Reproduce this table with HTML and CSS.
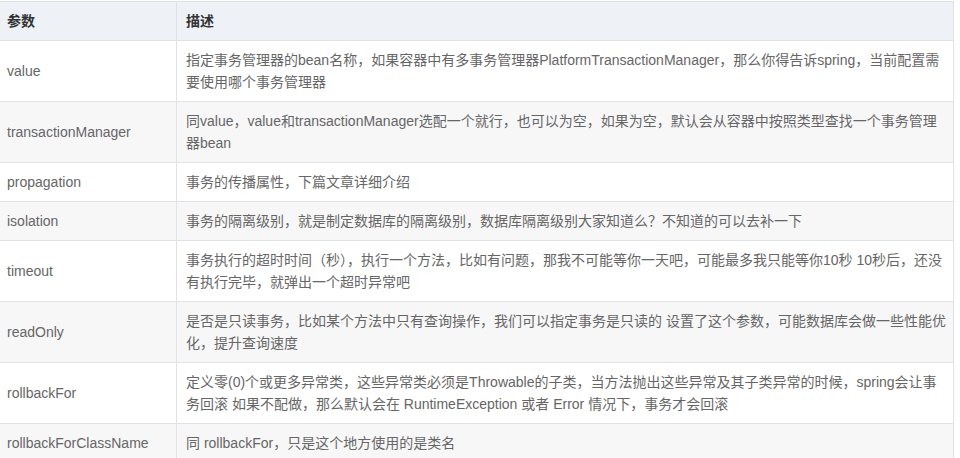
FILE: index.html
```html
<!DOCTYPE html>
<html lang="zh-CN">
<head>
<meta charset="utf-8">
<title>Transactional 参数</title>
<link rel="stylesheet" href="styles.css">
</head>
<body>
<table class="params">
  <colgroup>
    <col class="col-name">
    <col class="col-desc">
  </colgroup>
  <thead>
    <tr><th>参数</th><th>描述</th></tr>
  </thead>
  <tbody>
    <tr><td>value</td><td>指定事务管理器的bean名称，如果容器中有多事务管理器PlatformTransactionManager，那么你得告诉spring，当前配置需要使用哪个事务管理器</td></tr>
    <tr><td>transactionManager</td><td>同value，value和transactionManager选配一个就行，也可以为空，如果为空，默认会从容器中按照类型查找一个事务管理器bean</td></tr>
    <tr><td>propagation</td><td>事务的传播属性，下篇文章详细介绍</td></tr>
    <tr><td>isolation</td><td>事务的隔离级别，就是制定数据库的隔离级别，数据库隔离级别大家知道么？不知道的可以去补一下</td></tr>
    <tr><td>timeout</td><td>事务执行的超时时间（秒），执行一个方法，比如有问题，那我不可能等你一天吧，可能最多我只能等你10秒 10秒后，还没有执行完毕，就弹出一个超时异常吧</td></tr>
    <tr><td>readOnly</td><td>是否是只读事务，比如某个方法中只有查询操作，我们可以指定事务是只读的 设置了这个参数，可能数据库会做一些性能优化，提升查询速度</td></tr>
    <tr><td>rollbackFor</td><td>定义零(0)个或更多异常类，这些异常类必须是Throwable的子类，当方法抛出这些异常及其子类异常的时候，spring会让事务回滚 如果不配做，那么默认会在 RuntimeException 或者 Error 情况下，事务才会回滚</td></tr>
    <tr><td>rollbackForClassName</td><td>同 rollbackFor，只是这个地方使用的是类名</td></tr>
  </tbody>
</table>
</body>
</html>
```

FILE: styles.css
```css
html, body {
  margin: 0;
  padding: 0;
  background: #ffffff;
}

body {
  font-family: "Liberation Sans", Arial, "Noto Sans CJK SC", sans-serif;
  font-size: 14px;
  line-height: 22px;
  color: #666666;
}

.params {
  margin-top: 1px;
  width: 954px;
  table-layout: fixed;
  border-collapse: separate;
  border-spacing: 0;
  border-top: 1px solid #dfe2e6;
}

.col-name { width: 177px; }
.col-desc { width: 777px; }

.params th,
.params td {
  box-sizing: border-box;
  padding: 8px 3px 8px 9px;
  border-right: 1px solid #dfe2e6;
  border-bottom: 1px solid #dfe2e6;
  text-align: left;
  vertical-align: middle;
  word-break: normal;
}

.params th:first-child,
.params td:first-child {
  padding-left: 7px;
}

.params thead th {
  background: #eef1f5;
  color: #333333;
  font-weight: bold;
}

.params tbody tr:nth-child(even) td {
  background: #f7f7f8;
}
```
